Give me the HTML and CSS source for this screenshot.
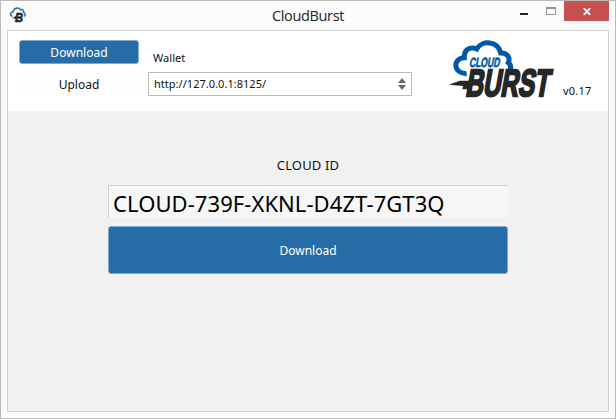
FILE: index.html
```html
<!DOCTYPE html>
<html lang="en">
<head>
<meta charset="utf-8">
<title>CloudBurst</title>
<link rel="stylesheet" href="styles.css">
</head>
<body>
<div class="window">
  <header class="titlebar">
    <svg class="app-icon" viewBox="0 0 16 16">
      <path d="M2.5 9.5C-.5 8.500.2 5.200 3.200 4.800C3.500 1.200 8.500-.3 10.500 2.700C13 2.200 14.300 4.200 13.600 5.600C15.800 6.200 15.600 8.800 13.800 9.300" fill="none" stroke="#2470ae" stroke-width="1.500"/>
      <path d="M2.500 11L6 9V12Z" fill="#252525"/>
      <text class="icon-letter" x="5" y="15" textLength="8" lengthAdjust="spacingAndGlyphs">B</text>
    </svg>
    <h1 class="title">CloudBurst</h1>
    <div class="controls">
      <span class="minimize"></span>
      <span class="maximize"></span>
      <span class="close"><svg width="8" height="7" viewBox="0 0 8 7"><path d="M.8 .2L7.200 6.800M7.200 .2L.8 6.800" stroke="#fff" stroke-width="1.900"/></svg></span>
    </div>
  </header>
  <main class="client">
    <section class="toolbar">
      <nav class="tabs">
        <button class="tab active">Download</button>
        <button class="tab">Upload</button>
      </nav>
      <div class="wallet">
        <label class="wallet-label">Wallet</label>
        <div class="select"><span class="url">http://127.0.0.1:8125/</span>
          <svg width="8" height="12" viewBox="0 0 8 12"><path d="M0 5L4 0L8 5ZM0 7H8L4 12Z" fill="#686868"/></svg>
        </div>
      </div>
      <svg class="logo" viewBox="0 0 360 204">
        <path d="M80 116C40 117 36 70 73 68C71 43 91 34 110 42C126 14 174 18 182 54C202 53 212 69 205 83C213 89 213 97 210 104" fill="none" stroke="#0059a6" stroke-width="15"/>
        <text class="logo-cloud" transform="translate(87 97) skewX(-10)" textLength="91" lengthAdjust="spacingAndGlyphs">CLOUD</text>
        <path d="M27 149L59 137H88V163H67L69 153Z" fill="#262626"/>
        <text class="logo-burst" transform="translate(75 183) skewX(-10)" textLength="251" lengthAdjust="spacingAndGlyphs">BURST</text>
      </svg>
      <span class="version">v0.17</span>
    </section>
    <section class="content">
      <label class="id-label">CLOUD ID</label>
      <div class="id-field">CLOUD-739F-XKNL-D4ZT-7GT3Q</div>
      <button class="submit">Download</button>
    </section>
  </main>
</div>
</body>
</html>
```
FILE: styles.css
```css
* { box-sizing: border-box; }
body { margin: 0; font: 12px "Noto Sans", sans-serif; color: #111; }
button { border: 0; padding: 0; font: inherit; color: inherit; }
.window {
  display: flex; flex-direction: column;
  width: 616px; height: 419px; padding: 0 6px 6px;
  border: 1px solid #bbb; background: #fbfbfb;
}
.titlebar { display: grid; grid-template-columns: 135px 1fr 135px; height: 29px; flex: none; }
.app-icon { width: 16px; height: 16px; margin: 6px 0 0 3px; overflow: visible; }
.icon-letter { font: italic bold 12.5px "Liberation Sans", sans-serif; fill: #252525; stroke: #252525; stroke-width: .6px; }
.title { margin: 4px 0 0; text-align: center; font: 14.5px/21px "Open Sans", sans-serif; letter-spacing: -.35px; color: #222; }
.controls { display: flex; justify-content: flex-end; }
.minimize { width: 8px; height: 2px; margin: 12px 18px 0 0; background: #222; }
.maximize { width: 10px; height: 8px; margin: 6px 8px 0 0; border: 1px solid #929292; border-top-width: 2px; }
.close { display: flex; align-items: center; justify-content: center; width: 45px; height: 20px; background: #c75050; }
.client { display: flex; flex-direction: column; flex: 1; border: 1px solid #d3d3d3; background: #f1f1f1; }
.toolbar { display: flex; height: 80px; flex: none; padding-left: 11px; background: #fff; }
.tabs { width: 120px; padding-top: 9px; }
.tab { display: block; width: 120px; height: 24px; margin-bottom: 8px; border-radius: 3px; background: #fefefe; line-height: 24px; padding-top: 1px; letter-spacing: .02px; }
.active { background: #266da8; border: 1px solid #7faccc; color: #fff; line-height: 22px; }
.wallet { width: 264px; margin-left: 9px; padding-top: 19px; }
.wallet-label { display: block; height: 22px; padding-left: 5px; font-size: 11px; line-height: 16px; letter-spacing: .05px; }
.select { display: flex; align-items: center; justify-content: space-between; height: 24px; padding: 0 5px; border: 1px solid #b9b9b9; font-size: 11px; }
.url { margin-bottom: 2px; letter-spacing: .03px; }
.logo { width: 120px; height: 68px; margin: 4px 0 0 28px; flex: none; overflow: visible; }
.logo-cloud { font: bold 40px "Liberation Sans", sans-serif; fill: #0059a6; stroke: #0059a6; stroke-width: 2px; }
.logo-burst { font: bold 114px "Liberation Sans", sans-serif; fill: #262626; stroke: #262626; stroke-width: 7px; }
.version { margin: 52px 0 0 3px; font-size: 11px; line-height: 16px; letter-spacing: .2px; }
.content { display: flex; flex-direction: column; align-items: center; padding-top: 45px; }
.id-label { height: 29px; font-size: 13px; line-height: 18px; letter-spacing: .15px; }
.id-field { width: 400px; height: 33px; padding-left: 4px; border: solid #d0d0d0; border-width: 1px 0 0 1px; background: #f6f6f6; color: #000; font-size: 22px; line-height: 34px; letter-spacing: .07px; white-space: nowrap; }
.submit { width: 400px; height: 48px; margin-top: 8px; border: 1px solid #7faccc; border-radius: 3px; background: #266da8; color: #fff; }
```
